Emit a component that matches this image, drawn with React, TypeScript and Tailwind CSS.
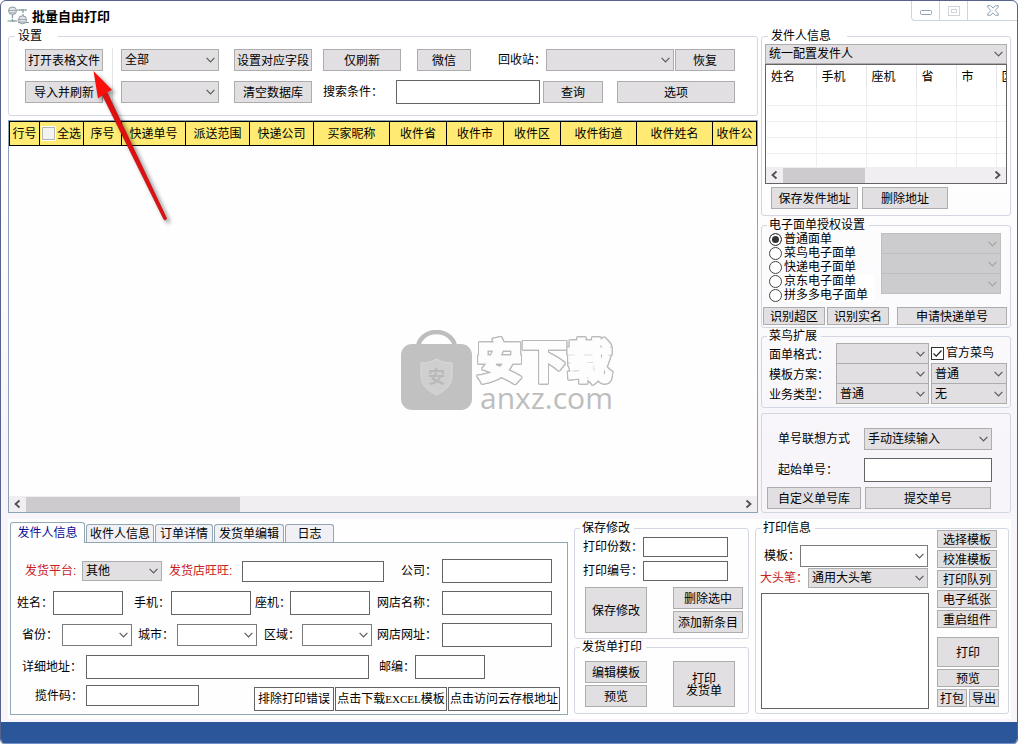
import { useState } from 'react';
import type { ReactNode } from 'react';
import clsx from 'clsx';

const inputClass = 'block border border-[#646464] bg-white px-1 outline-none';
const buttonClass =
  'flex shrink-0 items-center justify-center border border-[#adadad] bg-[#e1dfe2] pt-[2px] text-center leading-3 whitespace-nowrap hover:border-[#0078d7] hover:bg-[#e5f1fb]';

function Group({ title, wideTitle, className, children }: { title?: string; wideTitle?: boolean; className?: string; children: ReactNode }) {
  return (
    <fieldset className={clsx('min-w-0 rounded-[3px] border border-[#d3d7e2]', className)}>
      {title && <legend className={clsx('h-3 leading-3', wideTitle ? 'ml-[6px] pr-4 pl-[3px]' : 'ml-[5px] pr-1 pl-[2px]')}>{title}</legend>}
      {children}
    </fieldset>
  );
}

function Button({ className, children }: { className: string; children: ReactNode }) {
  return (
    <button type="button" className={clsx(buttonClass, className)}>
      {children}
    </button>
  );
}

function Select({ label, value = '', tone = 'gray', className }: { label: string; value?: string; tone?: 'gray' | 'white' | 'disabled'; className: string }) {
  return (
    <div className={clsx('relative shrink-0', className)}>
      <select
        aria-label={label}
        disabled={tone === 'disabled'}
        className={clsx(
          'block h-full w-full appearance-none border pr-5 pl-[3px] leading-4 outline-none',
          tone === 'gray' && 'border-[#adadad] bg-[#e1dfe2]',
          tone === 'white' && 'border-[#7a7a7a] bg-white',
          tone === 'disabled' && 'border-[#bfbfbf] bg-[#cccbcd]',
        )}
      >
        <option>{value}</option>
      </select>
      <svg
        viewBox="0 0 9 6"
        className={clsx('pointer-events-none absolute top-1/2 right-1 h-[6px] w-[9px] -translate-y-1/2', tone === 'disabled' ? 'text-[#a3a3a3]' : 'text-[#5a5a5a]')}
      >
        <path d="M0.6 0.9 4.5 4.8 8.4 0.9" fill="none" stroke="currentColor" strokeWidth="1.2" />
      </svg>
    </div>
  );
}

function Field({ label, labelClass, inputSize, red }: { label: string; labelClass: string; inputSize: string; red?: boolean }) {
  return (
    <label className="flex shrink-0 items-center">
      <span className={clsx('whitespace-nowrap', labelClass, red && 'text-[#c8201c]')}>{label}</span>
      <input type="text" className={clsx(inputClass, inputSize)} />
    </label>
  );
}

function ScrollBar({ thumbClass }: { thumbClass: string }) {
  return (
    <div className="flex h-4 shrink-0 items-center bg-[#f0eef1] text-[#505050]">
      <svg viewBox="0 0 17 16" className="h-4 w-[17px] shrink-0">
        <path d="M10.5 4.5 6.5 8l4 3.5" fill="none" stroke="currentColor" strokeWidth="1.8" />
      </svg>
      <div className={clsx('h-[15px] bg-[#cdcbce]', thumbClass)} />
      <svg viewBox="0 0 17 16" className="ml-auto h-4 w-[17px] shrink-0">
        <path d="M6.5 4.5 10.5 8l-4 3.5" fill="none" stroke="currentColor" strokeWidth="1.8" />
      </svg>
    </div>
  );
}

function TitleBar() {
  return (
    <header className="flex h-[29px] items-start">
      <svg viewBox="0 0 22 20" className="mt-[5px] ml-[6px] h-5 w-[22px]">
        <g fill="none" stroke="#7c9a92" strokeWidth="1.2">
          <path d="M5.5 9v6M0.5 15h10M10 4h10M16 4v6M11 16.5h11" strokeDasharray="3 1" />
          <path d="M3 15h6M12 4h7" />
        </g>
        <g fill="#e3e7ec" stroke="#8e96a2">
          <ellipse cx="5.5" cy="4.8" rx="4" ry="3.8" />
          <ellipse cx="15.5" cy="13.8" rx="4" ry="4" />
          <path d="M2 4.5h7M12 13.5h7M3 6.8h5M13 16h5" strokeWidth="0.8" />
        </g>
      </svg>
      <h1 className="mt-[6px] ml-[3px] text-[13px] leading-5 font-bold">批量自由打印</h1>
      <div className="ml-auto flex h-5 w-[106px] rounded-bl-[4px] border-b border-l border-[#c9d6de] text-[#8fa3b4]">
        <button type="button" aria-label="最小化" className="flex w-7 items-center justify-center border-r border-[#c9d6de]">
          <svg viewBox="0 0 12 12" className="h-3 w-3">
            <rect x="0.5" y="5.5" width="11" height="4" rx="1" fill="#fff" stroke="currentColor" />
          </svg>
        </button>
        <button type="button" aria-label="最大化" className="flex w-7 items-center justify-center border-r border-[#c9d6de] text-[#cdd6dd]">
          <svg viewBox="0 0 12 12" className="h-3 w-3">
            <rect x="0.5" y="1.5" width="11" height="9" fill="none" stroke="currentColor" />
            <rect x="3.5" y="4.5" width="5" height="3" fill="none" stroke="currentColor" />
          </svg>
        </button>
        <button type="button" aria-label="关闭" className="flex flex-1 items-center justify-center">
          <svg viewBox="0 0 12 11" className="h-[11px] w-3">
            <path
              d="M0.7 0.7h3L6 3.1 8.3 0.7h3v1.4L8.2 5.5l3.1 3.4v1.4h-3L6 7.9l-2.3 2.4h-3V8.9l3.1-3.4L0.7 2.1z"
              fill="#fff"
              stroke="currentColor"
              strokeLinejoin="round"
            />
          </svg>
        </button>
      </div>
    </header>
  );
}

function Settings() {
  return (
    <Group title="设置" wideTitle>
      <div className="flex pt-[6px] pb-[11px] pl-4">
        <div className="flex w-[78px] flex-col gap-[10px] py-px">
          <Button className="h-[22px]">打开表格文件</Button>
          <Button className="h-[22px]">导入并刷新</Button>
        </div>
        <div className="mr-2 ml-[9px] w-px bg-[#e6e6ea]" />
        <div className="flex w-[98px] flex-col justify-between py-px">
          <Select label="范围" value="全部" className="h-[22px]" />
          <Select label="批次" className="h-[22px]" />
        </div>
        <div className="ml-[15px] flex flex-col gap-2">
          <div className="flex h-6 items-center">
            <Button className="h-[22px] w-[78px]">设置对应字段</Button>
            <Button className="ml-[11px] h-[22px] w-[78px]">仅刷新</Button>
            <Button className="ml-4 h-[22px] w-[54px]">微信</Button>
            <span className="ml-[27px] w-12">回收站：</span>
            <Select label="回收站" className="h-[22px] w-32" />
            <Button className="ml-px h-[22px] w-[60px]">恢复</Button>
          </div>
          <div className="flex h-6 items-center">
            <Button className="mr-[11px] h-[22px] w-[78px]">清空数据库</Button>
            <Field label="搜索条件：" labelClass="w-[73px]" inputSize="h-6 w-36" />
            <Button className="ml-[3px] h-[22px] w-[60px]">查询</Button>
            <Button className="ml-[14px] h-[22px] w-[118px]">选项</Button>
          </div>
        </div>
      </div>
    </Group>
  );
}

const orderColumns = [
  { name: '行号', width: 'w-[30px]' },
  { name: '全选', width: 'w-[44px]' },
  { name: '序号', width: 'w-[38px]' },
  { name: '快递单号', width: 'w-16' },
  { name: '派送范围', width: 'w-16' },
  { name: '快递公司', width: 'w-16' },
  { name: '买家昵称', width: 'w-[76px]' },
  { name: '收件省', width: 'w-[57px]' },
  { name: '收件市', width: 'w-[57px]' },
  { name: '收件区', width: 'w-[57px]' },
  { name: '收件街道', width: 'w-[76px]' },
  { name: '收件姓名', width: 'w-[76px]' },
  { name: '收件公', width: 'w-[44px]' },
];

function Watermark() {
  return (
    <div className="pointer-events-none absolute top-[209px] left-[392px] flex">
      <svg viewBox="0 0 71 80" className="h-20 w-[71px]">
        <path d="M17 18a18.5 16 0 0 1 37 0" fill="none" stroke="#bdbdbd" strokeWidth="4.5" />
        <rect y="14" width="71" height="66" rx="11" fill="#c1c1c1" />
        <path d="M35.5 29c5 3 10 4 15.5 4v13c0 9-7 15-15.5 19C27 61 20 55 20 46V33c5.5 0 10.500-1 15.5-4z" fill="#cfcfcf" stroke="#dadada" />
        <text x="35.5" y="53" textAnchor="middle" fontSize="17" fontWeight="bold" fill="#b9b9b9">
          安
        </text>
      </svg>
      <div className="ml-[5px] flex flex-col pt-[11px]">
        <span className="text-[45px] leading-[44px] font-bold text-[#fdfdfd] [filter:drop-shadow(1px_0_0_#b8b8b8)_drop-shadow(-1px_0_0_#b8b8b8)_drop-shadow(0_1px_0_#b8b8b8)_drop-shadow(0_-1px_0_#b8b8b8)] [-webkit-text-stroke:3px_#fdfdfd]">
          安下载
        </span>
        <span className="pl-[3px] font-['Open_Sans',sans-serif] text-[30px] leading-[26px] font-medium text-[#bdbdbd]">anxz.com</span>
      </div>
    </div>
  );
}

function OrderTable() {
  return (
    <section className="relative mt-1 flex flex-1 flex-col overflow-hidden border border-[#8da2b8] bg-[#fefefe]">
      <div className="flex-1 overflow-hidden">
        <table className="w-[748px] table-fixed border-collapse">
          <thead>
            <tr className="h-6 bg-[#ffeb73]">
              {orderColumns.map((col) => (
                <th key={col.name} className={clsx('border border-black p-0 font-normal whitespace-nowrap', col.width)}>
                  {col.name === '全选' ? (
                    <label className="flex items-center justify-center gap-[2px]">
                      <input type="checkbox" className="h-[13px] w-[13px] appearance-none border border-[#b5b5b5] bg-[#f3f3f3] outline outline-white checked:bg-[#555]" />
                      全选
                    </label>
                  ) : (
                    col.name
                  )}
                </th>
              ))}
            </tr>
          </thead>
        </table>
      </div>
      <Watermark />
      <ScrollBar thumbClass="w-[214px]" />
    </section>
  );
}

const senderColumns = [
  { name: '姓名', width: 'w-[50px]' },
  { name: '手机', width: 'w-[50px]' },
  { name: '座机', width: 'w-[50px]' },
  { name: '省', width: 'w-10' },
  { name: '市', width: 'w-10' },
  { name: '区', width: 'w-10' },
];

function SenderGroup() {
  return (
    <Group title="发件人信息" wideTitle>
      <div className="px-[3px] pt-[2px] pb-[6px]">
        <Select label="统一配置发件人" value="统一配置发件人" className="h-5" />
        <div className="h-[120px] overflow-hidden border border-[#646464] bg-white">
          <div className="h-[102px] overflow-hidden">
            <table className="w-[270px] table-fixed border-collapse">
              <thead>
                <tr className="h-6">
                  {senderColumns.map((col) => (
                    <th key={col.name} className={clsx('border-r border-[#e4e4e4] p-0 pl-[5px] text-left font-normal', col.width)}>
                      {col.name}
                    </th>
                  ))}
                </tr>
              </thead>
              <tbody>
                {[1, 2, 3, 4, 5].map((row) => (
                  <tr key={row} className="h-4">
                    {senderColumns.map((col) => (
                      <td key={col.name} className="border-r border-b border-[#efefef] p-0" />
                    ))}
                  </tr>
                ))}
              </tbody>
            </table>
          </div>
          <ScrollBar thumbClass="w-[82px]" />
        </div>
        <div className="mt-[3px] flex gap-1 pl-[6px]">
          <Button className="h-[22px] w-[87px]">保存发件地址</Button>
          <Button className="h-[22px] w-[86px]">删除地址</Button>
        </div>
      </div>
    </Group>
  );
}

const waybillTypes = ['普通面单', '菜鸟电子面单', '快递电子面单', '京东电子面单', '拼多多电子面单'];

function WaybillGroup() {
  const [type, setType] = useState(waybillTypes[0]);
  return (
    <Group title="电子面单授权设置" className="mt-[3px]">
      <div className="flex justify-between pt-px pr-[9px] pl-[7px]">
        <div className="flex flex-col">
          {waybillTypes.map((name, i) => (
            <label key={name} className="flex h-[14px] items-center gap-[2px]">
              <input
                type="radio"
                name="waybill"
                checked={type === name}
                onChange={() => setType(name)}
                className="h-[13px] w-[13px] appearance-none rounded-full border border-[#444] bg-white checked:bg-[#333] checked:shadow-[inset_0_0_0_2px_white]"
              />
              <span className={clsx('w-[90px] leading-[14px]', i > 2 && 'bg-white')}>{name}</span>
            </label>
          ))}
        </div>
        <div className="flex w-[120px] flex-col pt-px">
          <Select label="授权账号" tone="disabled" className="h-[21px]" />
          <Select label="授权网点" tone="disabled" className="-mt-px h-[21px]" />
          <Select label="授权地址" tone="disabled" className="-mt-px h-[21px]" />
        </div>
      </div>
      <div className="mt-[5px] flex gap-[2px] pr-[3px] pb-[2px] pl-px">
        <Button className="h-[18px] w-[62px]">识别超区</Button>
        <Button className="h-[18px] w-[62px]">识别实名</Button>
        <Button className="ml-auto h-[18px] w-[110px]">申请快递单号</Button>
      </div>
    </Group>
  );
}

function CainiaoGroup() {
  return (
    <Group title="菜鸟扩展" className="mt-[2px]">
      <div className="flex pt-px pr-[3px] pb-[2px] pl-[7px]">
        <div className="flex w-[67px] flex-col pt-[2px]">
          <span className="h-5 leading-5">面单格式：</span>
          <span className="h-5 leading-5">模板方案：</span>
          <span className="h-5 leading-5">业务类型：</span>
        </div>
        <div className="flex w-[93px] flex-col">
          <Select label="面单格式" className="h-[21px]" />
          <Select label="模板方案" className="-mt-px h-[21px]" />
          <Select label="业务类型" value="普通" className="-mt-px h-[21px]" />
        </div>
        <div className="ml-[2px] flex flex-1 flex-col">
          <label className="flex h-5 items-center gap-[2px]">
            <span className="relative flex">
              <input type="checkbox" defaultChecked className="peer h-[13px] w-[13px] appearance-none border border-[#333] bg-white" />
              <svg viewBox="0 0 13 13" className="pointer-events-none absolute inset-0 hidden h-[13px] w-[13px] peer-checked:block">
                <path d="M2.5 6.5 5.2 9.2 10.5 3.5" fill="none" stroke="#222" strokeWidth="1.2" />
              </svg>
            </span>
            官方菜鸟
          </label>
          <Select label="模板类别" value="普通" className="h-[21px]" />
          <Select label="业务附加" value="无" className="-mt-px h-[21px]" />
        </div>
      </div>
    </Group>
  );
}

function NumberGroup() {
  return (
    <Group className="mt-[5px]">
      <div className="flex flex-col pt-[14px] pb-[3px] pl-[5px]">
        <div className="flex h-[22px] items-center pl-[11px]">
          <span className="w-[86px]">单号联想方式</span>
          <Select label="单号联想方式" value="手动连续输入" className="h-[22px] w-32" />
        </div>
        <div className="mt-2 pl-[11px]">
          <Field label="起始单号：" labelClass="w-[86px]" inputSize="h-6 w-32" />
        </div>
        <div className="mt-[5px] flex gap-1">
          <Button className="h-[22px] w-[94px]">自定义单号库</Button>
          <Button className="h-[22px] w-[126px]">提交单号</Button>
        </div>
      </div>
    </Group>
  );
}

const tabs = [
  { name: '发件人信息', width: 'w-[75px]' },
  { name: '收件人信息', width: 'w-[68px]' },
  { name: '订单详情', width: 'w-[58px]' },
  { name: '发货单编辑', width: 'w-[70px]' },
  { name: '日志', width: 'w-[49px]' },
];

function DetailTabs() {
  const [active, setActive] = useState(tabs[0].name);
  const linkButton = 'h-6 shrink-0 border border-[#646464] bg-white text-center leading-3 whitespace-nowrap';
  return (
    <section className="min-w-0 flex-1">
      <div role="tablist" className="flex h-5 items-end gap-px">
        {tabs.map((tab) => (
          <button
            key={tab.name}
            type="button"
            role="tab"
            aria-selected={active === tab.name}
            onClick={() => setActive(tab.name)}
            className={clsx(
              'rounded-t-[3px] border border-b-0 border-[#91a7b4] whitespace-nowrap',
              tab.width,
              active === tab.name ? 'relative -mb-px h-[21px] bg-white text-[#0a0a96]' : 'h-[18px] bg-[#f1f0f4]',
            )}
          >
            {tab.name}
          </button>
        ))}
      </div>
      <div className="flex flex-col gap-2 border border-[#91a7b4] bg-[#fefefe] pt-4 pb-[3px] pl-[6px]">
        <div className="flex h-6 items-center pl-2">
          <span className="w-[57px] text-[#c8201c]">发货平台:</span>
          <Select label="发货平台" value="其他" className="mr-[7px] h-5 w-20" />
          <Field label="发货店旺旺:" labelClass="w-[73px]" inputSize="mr-[17px] h-[21px] w-[142px]" red />
          <Field label="公司：" labelClass="w-[41px]" inputSize="h-6 w-[110px]" />
        </div>
        <div className="flex h-6 items-center">
          <Field label="姓名：" labelClass="w-9" inputSize="mr-[11px] h-6 w-[70px]" />
          <Field label="手机：" labelClass="w-[37px]" inputSize="mr-1 h-6 w-20" />
          <Field label="座机：" labelClass="w-[35px]" inputSize="mr-[7px] h-6 w-20" />
          <Field label="网店名称：" labelClass="w-[65px]" inputSize="h-6 w-[110px]" />
        </div>
        <div className="flex h-6 items-center pl-[5px]">
          <span className="w-10">省份：</span>
          <Select label="省份" tone="white" className="mr-[6px] h-[22px] w-[70px]" />
          <span className="w-[39px]">城市：</span>
          <Select label="城市" tone="white" className="mr-[7px] h-[22px] w-20" />
          <span className="w-[38px]">区域：</span>
          <Select label="区域" tone="white" className="mr-[5px] h-[22px] w-[70px]" />
          <Field label="网店网址：" labelClass="w-[65px]" inputSize="h-6 w-[110px]" />
        </div>
        <div className="flex h-6 items-center pl-[5px]">
          <Field label="详细地址：" labelClass="w-16" inputSize="mr-[10px] h-6 w-[283px]" />
          <Field label="邮编：" labelClass="w-9" inputSize="h-6 w-[70px]" />
        </div>
        <div className="-mt-[2px] flex h-[26px] items-start pl-[18px]">
          <Field label="揽件码：" labelClass="w-[51px]" inputSize="h-[21px] w-[113px]" />
          <div className="ml-[55px] flex gap-px self-end">
            <button type="button" className={clsx(linkButton, 'w-20')}>排除打印错误</button>
            <button type="button" className={clsx(linkButton, 'w-28')}>
              点击下载<span className="font-['Liberation_Serif',serif] text-[11px]">EXCEL</span>模板
            </button>
            <button type="button" className={clsx(linkButton, 'w-28')}>点击访问云存根地址</button>
          </div>
        </div>
      </div>
    </section>
  );
}

function SaveAndPrint() {
  return (
    <div className="flex w-[175px] shrink-0 flex-col gap-[2px]">
      <Group title="保存修改">
        <div className="flex flex-col gap-1 pt-[3px] pl-2">
          <Field label="打印份数：" labelClass="w-[60px]" inputSize="h-5 w-[85px]" />
          <Field label="打印编号：" labelClass="w-[60px]" inputSize="h-5 w-[85px]" />
        </div>
        <div className="flex gap-[26px] pt-[6px] pb-[5px] pl-[10px]">
          <Button className="h-[46px] w-[62px]">保存修改</Button>
          <div className="flex flex-col gap-[2px]">
            <Button className="h-[22px] w-[70px]">删除选中</Button>
            <Button className="h-[22px] w-[70px]">添加新条目</Button>
          </div>
        </div>
      </Group>
      <Group title="发货单打印">
        <div className="flex gap-[26px] pt-2 pb-[6px] pl-[10px]">
          <div className="flex flex-col gap-[2px]">
            <Button className="h-[22px] w-[62px]">编辑模板</Button>
            <Button className="h-[22px] w-[62px]">预览</Button>
          </div>
          <Button className="h-[46px] w-[62px]">
            打印
            <br />
            发货单
          </Button>
        </div>
      </Group>
    </div>
  );
}

function PrintInfo() {
  return (
    <Group title="打印信息" className="w-[254px] shrink-0">
      <div className="flex gap-2 pl-1">
        <div className="flex w-[169px] flex-col pt-[11px] pb-1">
          <div className="flex items-center pl-1">
            <span className="w-9">模板：</span>
            <Select label="模板" tone="white" className="h-[22px] w-32" />
          </div>
          <div className="mt-px flex items-center">
            <span className="w-12 text-[#c8201c]">大头笔：</span>
            <Select label="大头笔" value="通用大头笔" className="h-5 w-[120px]" />
          </div>
          <textarea aria-label="打印记录" className="mt-[5px] ml-px block h-[116px] w-[168px] resize-none border border-[#646464] bg-white p-1 outline-none" />
        </div>
        <div className="-mt-1 flex w-[62px] flex-col gap-[2px]">
          {['选择模板', '校准模板', '打印队列', '电子纸张', '重启组件'].map((name) => (
            <Button key={name} className="h-[18px] w-[60px]">
              {name}
            </Button>
          ))}
          <Button className="mt-[7px] h-[30px]">打印</Button>
          <Button className="h-[18px]">预览</Button>
          <div className="flex gap-[2px]">
            <Button className="h-[18px] w-[30px]">打包</Button>
            <Button className="h-[18px] w-[30px]">导出</Button>
          </div>
        </div>
      </div>
    </Group>
  );
}

function PointerArrow() {
  return (
    <svg viewBox="0 0 90 165" className="pointer-events-none absolute top-[63px] left-[83px] h-[165px] w-[90px] drop-shadow-[3px_3px_2px_rgba(0,0,0,0.45)]">
      <path d="M18.5 31 80 155.5a1.500 1.500 0 0 0 2.500-1.200L23 28.500z" fill="#e01010" stroke="#c40d0d" strokeWidth="0.8" />
      <path d="M9.500 7 14 34.500 19.500 30.500 22.500 28.500 28 26z" fill="#fb0f0c" />
    </svg>
  );
}

export default function App() {
  return (
    <div className="relative flex min-h-screen flex-col overflow-hidden rounded-[6px] border border-[#56618c] bg-linear-to-b from-white from-20% to-[#f7f5f9] to-60% font-['Liberation_Sans','Noto_Sans_CJK_SC',sans-serif] text-xs leading-4 text-black">
      <TitleBar />
      <main className="flex flex-1 flex-col">
        <div className="flex flex-1 gap-[3px] pr-[6px] pl-[7px]">
          <div className="flex min-w-0 flex-1 flex-col">
            <Settings />
            <OrderTable />
          </div>
          <aside className="w-[250px] shrink-0">
            <SenderGroup />
            <WaybillGroup />
            <CainiaoGroup />
            <NumberGroup />
          </aside>
        </div>
        <div className="mt-[6px] mr-[6px] mb-[3px] ml-[7px] flex items-start gap-[6px] bg-[#fefefe] px-[2px] pt-[3px] pb-1">
          <DetailTabs />
          <SaveAndPrint />
          <PrintInfo />
        </div>
      </main>
      <footer className="flex h-[22px] flex-col justify-end rounded-b-[5px] bg-[#2b579a]">
        <div className="mx-1 h-px bg-[#6f93c9]" />
      </footer>
      <PointerArrow />
    </div>
  );
}
